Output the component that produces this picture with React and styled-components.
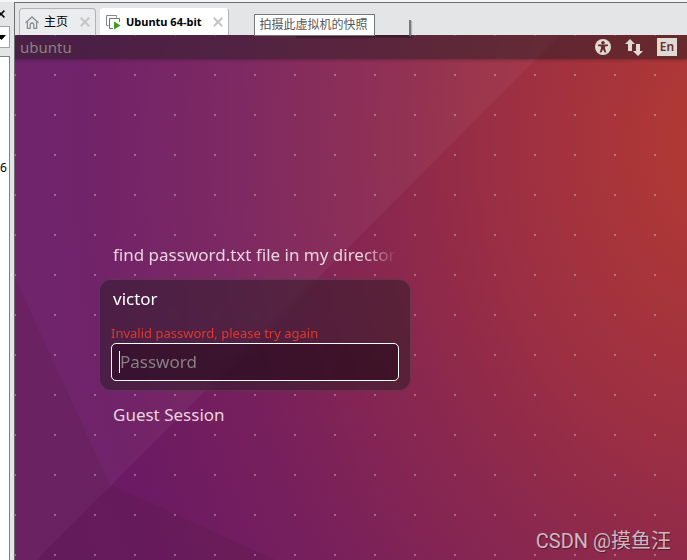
import styled, { createGlobalStyle } from "styled-components";

export default function App() {
  return (
    <>
      <GlobalStyle />
      <Window>
        <Sidebar />
        <Main>
          <TabBar />
          <GuestScreen />
        </Main>
      </Window>
    </>
  );
}

function Sidebar() {
  return (
    <SidebarContainer>
      <PanelClose aria-label="Close library">
        <CrossIcon size={8} />
      </PanelClose>
      <SearchDrop aria-label="Search options">
        <svg width="9" height="5" viewBox="0 0 9 5">
          <path d="M0 0h9L4.5 5z" fill="#000" />
        </svg>
      </SearchDrop>
      <Library>
        <span>6</span>
      </Library>
    </SidebarContainer>
  );
}

function TabBar() {
  return (
    <Tabs>
      <Tab>
        <TabButton>
          <HomeIcon />
          主页
        </TabButton>
        <TabClose aria-label="关闭 主页">
          <CrossIcon size={10} />
        </TabClose>
      </Tab>
      <Tab $active>
        <TabButton $active>
          <MachineIcon />
          Ubuntu 64-bit
        </TabButton>
        <TabClose aria-label="关闭 Ubuntu 64-bit">
          <CrossIcon size={10} />
        </TabClose>
      </Tab>
      <TooltipAnchor>
        <TooltipShadow />
        <Tooltip role="tooltip">拍摄此虚拟机的快照</Tooltip>
      </TooltipAnchor>
    </Tabs>
  );
}

function GuestScreen() {
  return (
    <Screen>
      <Wallpaper />
      <Panel>
        <Host>ubuntu</Host>
        <Indicators>
          <IndicatorButton aria-label="Accessibility">
            <AccessIcon />
          </IndicatorButton>
          <IndicatorButton aria-label="Network">
            <NetworkIcon />
          </IndicatorButton>
          <Language>En</Language>
        </Indicators>
      </Panel>
      <Greeter>
        <UserRow $faded>find password.txt file in my directory</UserRow>
        <LoginBox>
          <UserName>victor</UserName>
          <ErrorText htmlFor="password">Invalid password, please try again</ErrorText>
          <PasswordField>
            <Caret />
            <PasswordInput id="password" type="password" placeholder="Password" />
          </PasswordField>
        </LoginBox>
        <UserRow>Guest Session</UserRow>
      </Greeter>
      <Watermark>CSDN @摸鱼汪</Watermark>
    </Screen>
  );
}

function Wallpaper() {
  return (
    <WallpaperSvg viewBox="0 0 672 525" preserveAspectRatio="xMinYMin slice" aria-hidden="true">
      <defs>
        <radialGradient
          id="glow"
          gradientUnits="userSpaceOnUse"
          cx="0"
          cy="0"
          r="1"
          gradientTransform="translate(710 110) scale(710 980)"
        >
          <stop offset="0" stopColor="#b53b31" />
          <stop offset="0.31" stopColor="#9c2f42" />
          <stop offset="0.5" stopColor="#89274f" />
          <stop offset="0.72" stopColor="#761f5d" />
          <stop offset="0.9" stopColor="#6b1a63" />
          <stop offset="1" stopColor="#691b65" />
        </radialGradient>
        <pattern id="dots" width="40" height="40" x="-1" y="-1" patternUnits="userSpaceOnUse">
          <rect width="2" height="2" fill="#fff" fillOpacity="0.3" />
        </pattern>
      </defs>
      <rect width="672" height="525" fill="url(#glow)" />
      <path d="M0 0H545L22 525H0z" fill="#fff" fillOpacity="0.045" />
      <path d="M0 243L95 450L22 525H0z" fill="#5a1a48" fillOpacity="0.25" />
      <path d="M95 450L260 525H22z" fill="#561d45" fillOpacity="0.25" />
      <rect width="672" height="525" fill="url(#dots)" />
    </WallpaperSvg>
  );
}

function CrossIcon({ size }) {
  return (
    <svg width={size} height={size} viewBox="0 0 9 9">
      <path d="M0.7 0.7L8.3 8.3M8.3 0.7L0.7 8.3" stroke="currentColor" strokeWidth="1.7" />
    </svg>
  );
}

function HomeIcon() {
  return (
    <svg width="14" height="13" viewBox="0 0 14 13" fill="none" stroke="#8b8d90" strokeWidth="1.3">
      <path d="M0.6 6.8L7 0.9L13.4 6.8" />
      <path d="M2.4 5.6V12.3H5.2V8.4Q5.2 7 7 7T8.8 8.4V12.3H11.6V5.6" />
    </svg>
  );
}

function MachineIcon() {
  return (
    <svg width="15" height="15" viewBox="0 0 15 15" fill="none">
      <path d="M2.5 10.5H0.5V0.5H10.5V2.5" stroke="#85878a" />
      <path d="M7 13.5H3.5V3.5H13.5V7" stroke="#6f7174" />
      <path d="M8 6.5L14.5 10.5L8 14.5z" fill="#3f9c1c" />
    </svg>
  );
}

function AccessIcon() {
  return (
    <svg width="16" height="16" viewBox="0 0 16 16">
      <circle cx="8" cy="8" r="8" fill="#dfdbd2" />
      <circle cx="8" cy="3.7" r="1.8" fill="#6d2a2e" />
      <path d="M3 5.6H13V7.1L10 7.6V9.4L11.4 13.6H9.7L8 10.4L6.3 13.6H4.6L6 9.4V7.6L3 7.1z" fill="#6d2a2e" />
    </svg>
  );
}

function NetworkIcon() {
  return (
    <svg width="18" height="17" viewBox="0 0 18 17" fill="#dfdbd2">
      <path d="M5 0L10 5H7V12H3V5H0z" />
      <path d="M11 5H15V12H18L13 17L8 12H11z" />
    </svg>
  );
}

const GlobalStyle = createGlobalStyle`
  * {
    box-sizing: border-box;
  }

  body {
    margin: 0;
    background: #e3e5e7;
    font-family: "Noto Sans", "Noto Sans CJK SC", sans-serif;
  }

  button {
    padding: 0;
    border: none;
    background: none;
    color: inherit;
    font: inherit;
    cursor: pointer;
  }

  svg {
    display: block;
    flex-shrink: 0;
  }
`;

const Window = styled.div`
  display: flex;
  min-height: 100vh;
  border-top: 2px solid #f4f5f5;
`;

const SidebarContainer = styled.aside`
  display: flex;
  flex-direction: column;
  width: 14px;
  flex-shrink: 0;
  padding-right: 4px;
`;

const PanelClose = styled.button`
  display: flex;
  align-items: center;
  justify-content: flex-start;
  height: 24px;
  overflow: hidden;
  svg {
    margin-left: -3px;
  }
`;

const SearchDrop = styled.button`
  display: flex;
  align-items: center;
  height: 22px;
  margin-bottom: 8px;
  border: 1px solid #a0a2a5;
  border-left: none;
  background: #fff;
  overflow: hidden;
  svg {
    margin-left: -3px;
  }
`;

const Library = styled.div`
  flex: 1;
  padding-top: 102px;
  border: 1px solid #7d8084;
  border-left: none;
  border-bottom: none;
  background: #fff;
  font-size: 12px;
  line-height: 18px;
`;

const Main = styled.main`
  display: flex;
  flex-direction: column;
  flex: 1;
  min-width: 0;
  border-top: 1px solid #6c6e70;
  border-left: 1px solid #6c6e70;
`;

const Tabs = styled.div`
  display: flex;
  align-items: flex-end;
  gap: 4px;
  height: 32px;
  padding-left: 4px;
`;

const Tab = styled.div`
  display: flex;
  align-items: center;
  gap: ${(props) => (props.$active ? "11px" : "12px")};
  height: 27px;
  padding: 0 5px;
  border: 1px solid ${(props) => (props.$active ? "#fff" : "#b1b3b6")};
  border-right-color: #b1b3b6;
  border-bottom: none;
  border-radius: 4px 4px 0 0;
  background: ${(props) => (props.$active ? "#fff" : "#ebecee")};
`;

const TabButton = styled.button`
  display: flex;
  align-items: center;
  gap: 5px;
  font-size: ${(props) => (props.$active ? "11px" : "12px")};
  font-weight: ${(props) => (props.$active ? 700 : 400)};
  line-height: 20px;
  color: #000;
  white-space: nowrap;
`;

const TabClose = styled.button`
  color: #c4c5c7;
`;

const TooltipAnchor = styled.div`
  position: relative;
  z-index: 2;
  margin: 0 0 -1px 21px;
`;

const Tooltip = styled.div`
  position: relative;
  height: 22px;
  padding: 0 6px 0 5px;
  border: 1px solid #767676;
  background: #fff;
  color: #575757;
  font-size: 12px;
  line-height: 20px;
  white-space: nowrap;
`;

const TooltipShadow = styled.div`
  position: absolute;
  top: 6px;
  left: 42px;
  width: 115px;
  height: 17px;
  border-right: 2px solid #77797b;
  border-bottom: 2px solid #3c1c2c;
  box-shadow: 1px 1px 1px rgba(0, 0, 0, 0.2);
`;

const Screen = styled.section`
  position: relative;
  display: flex;
  flex-direction: column;
  flex: 1;
  overflow: hidden;
`;

const WallpaperSvg = styled.svg`
  position: absolute;
  inset: 0;
  width: 100%;
  height: 100%;
`;

const Panel = styled.header`
  position: relative;
  display: flex;
  align-items: center;
  justify-content: space-between;
  height: 24px;
  padding: 0 10px 0 5px;
  background: rgba(38, 28, 34, 0.5);
  box-shadow: 0 1px 3px rgba(0, 0, 0, 0.25);
`;

const Host = styled.span`
  font-size: 15px;
  line-height: 24px;
  color: #8c7f80;
`;

const Indicators = styled.div`
  display: flex;
  align-items: center;
  gap: 14px;
`;

const IndicatorButton = styled.button`
  display: flex;
`;

const Language = styled.button`
  width: 20px;
  height: 18px;
  background: #dfdbd2;
  color: #6d2a2e;
  font-size: 12px;
  font-weight: 600;
  line-height: 18px;
`;

const Greeter = styled.div`
  position: relative;
  display: flex;
  flex-direction: column;
  gap: 8px;
  width: 100%;
  max-width: 396px;
  padding: 180px 0 8px 84px;
`;

const UserRow = styled.button`
  padding-left: 14px;
  font-size: 17px;
  line-height: 32px;
  text-align: left;
  color: #e6d5df;
  white-space: nowrap;
  mask-image: ${(props) =>
    props.$faded ? "linear-gradient(to right, #000 264px, transparent 298px)" : "none"};
`;

const LoginBox = styled.form`
  display: flex;
  flex-direction: column;
  padding: 3px 11px 9px;
  border: 1px solid rgba(160, 130, 150, 0.22);
  border-radius: 12px;
  background: rgba(32, 26, 30, 0.46);
  backdrop-filter: blur(4px);
`;

const UserName = styled.h1`
  margin: 0 0 8px 2px;
  font-size: 17px;
  font-weight: 400;
  line-height: 32px;
  color: #fff;
`;

const ErrorText = styled.label`
  font-size: 13px;
  line-height: 20px;
  color: #df382c;
`;

const PasswordField = styled.div`
  display: flex;
  align-items: center;
  height: 38px;
  padding: 0 7px;
  border: 1px solid #fff;
  border-radius: 5px;
  background: rgba(25, 0, 15, 0.4);
`;

const Caret = styled.span`
  width: 1px;
  height: 22px;
  background: #fff;
`;

const PasswordInput = styled.input`
  flex: 1;
  min-width: 0;
  padding: 0;
  border: none;
  outline: none;
  background: transparent;
  color: #fff;
  caret-color: transparent;
  font-family: inherit;
  font-size: 17px;
  line-height: 24px;

  &::placeholder {
    color: #898085;
    opacity: 1;
  }
`;

const Watermark = styled.p`
  position: relative;
  align-self: flex-end;
  margin: auto 16px 4px 0;
  font-family: Roboto, "Noto Sans CJK SC", sans-serif;
  font-size: 20px;
  font-weight: 400;
  line-height: 30px;
  color: #ccb8c0;
  text-shadow: 1px 1px 1px rgba(0, 0, 0, 0.4);
`;
